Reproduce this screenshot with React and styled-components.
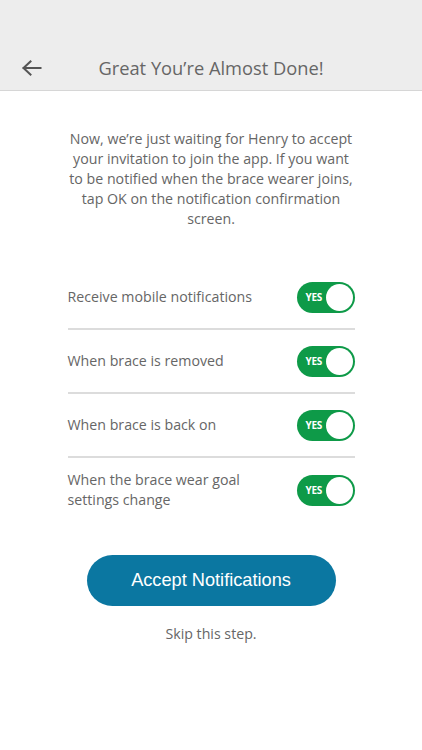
import styled, { createGlobalStyle } from "styled-components"

const GlobalStyle = createGlobalStyle`
  html, body {
    margin: 0;
    padding: 0;
    background: #FFFFFF;
  }
  * {
    box-sizing: border-box;
  }
`

const settings = [
  "Receive mobile notifications",
  "When brace is removed",
  "When brace is back on",
  "When the brace wear goal settings change",
]

export default function App() {
  return (
    <Page>
      <GlobalStyle />
      <Header>
        <BackButton>
          <svg width="20" height="16" viewBox="0 0 20 16">
            <path d="M1.5 8 H18.5 M8.5 1.5 L1.5 8 L8.5 14.5" fill="none" stroke="#555555" strokeWidth="2" strokeLinecap="square" strokeLinejoin="miter" />
          </svg>
        </BackButton>
        <h1>Great You’re Almost Done!</h1>
      </Header>
      <Content>
        <Intro>
          Now, we’re just waiting for Henry to accept<br />
          your invitation to join the app. If you want<br />
          to be notified when the brace wearer joins,<br />
          tap OK on the notification confirmation<br />
          screen.
        </Intro>
        <List>
          {settings.map((label, i) => (
            <Row key={label} $last={i === settings.length - 1}>
              <Label>{label}</Label>
              <Toggle>
                <span>YES</span>
                <Knob />
              </Toggle>
            </Row>
          ))}
        </List>
        <AcceptButton>Accept Notifications</AcceptButton>
        <SkipLink>Skip this step.</SkipLink>
      </Content>
    </Page>
  )
}

const Page = styled.div`
  width: 422px;
  min-height: 750px;
  background: #FFFFFF;
  font-family: 'Open Sans', sans-serif;
`

const Header = styled.div`
  height: 91px;
  background: #EDEDED;
  border-bottom: 1px solid #D6D6D6;
  display: flex;
  align-items: flex-end;
  justify-content: center;
  padding-bottom: 9px;
  position: relative;
  h1 {
    margin: 0;
    font-family: 'Open Sans', sans-serif;
    font-weight: 400;
    font-size: 18.3px;
    color: #666666;
    line-height: 26px;
  }
`

const BackButton = styled.div`
  position: absolute;
  left: 22px;
  bottom: 14px;
  display: flex;
  svg {
    display: block;
  }
`

const Content = styled.div`
  display: flex;
  flex-direction: column;
  align-items: center;
  padding-top: 38px;
`

const Intro = styled.p`
  margin: 0;
  width: 330px;
  text-align: center;
  font-size: 14.2px;
  line-height: 20px;
  color: #666666;
`

const List = styled.div`
  width: 287px;
  margin-top: 37px;
  display: flex;
  flex-direction: column;
`

const Row = styled.div`
  height: 64px;
  display: flex;
  align-items: center;
  justify-content: space-between;
  border-bottom: ${p => (p.$last ? "none" : "2px solid #DCDCDC")};
`

const Label = styled.div`
  width: 200px;
  font-size: 14.2px;
  line-height: 20px;
  color: #666666;
`

const Toggle = styled.div`
  width: 58px;
  height: 31px;
  border-radius: 16px;
  background: #0E9A48;
  display: flex;
  align-items: center;
  justify-content: space-between;
  padding: 0 2px 0 9px;
  span {
    font-family: 'Open Sans', sans-serif;
    font-weight: 700;
    font-size: 10px;
    letter-spacing: -0.3px;
    color: #FFFFFF;
  }
`

const Knob = styled.div`
  width: 27px;
  height: 27px;
  border-radius: 50%;
  background: #FFFFFF;
`

const AcceptButton = styled.button`
  margin-top: 33px;
  width: 249px;
  height: 51px;
  border: none;
  border-radius: 26px;
  background: #0B77A1;
  color: #FFFFFF;
  font-family: 'Liberation Sans', Arial, sans-serif;
  font-size: 18.2px;
  cursor: pointer;
`

const SkipLink = styled.div`
  margin-top: 18px;
  font-size: 14.2px;
  line-height: 20px;
  color: #666666;
`
